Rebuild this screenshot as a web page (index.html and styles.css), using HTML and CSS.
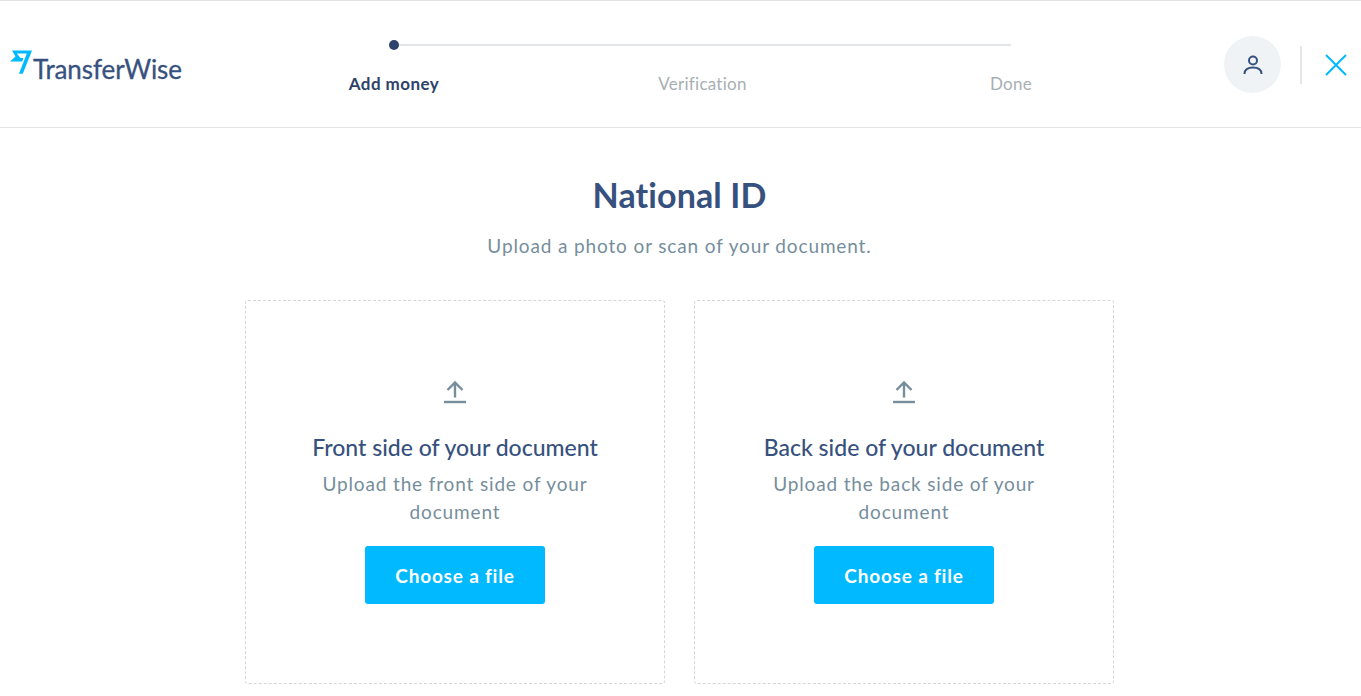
FILE: index.html
```html
<!DOCTYPE html>
<html lang="en">
<head>
<meta charset="utf-8">
<title>National ID</title>
<link rel="stylesheet" href="styles.css">
</head>
<body>
<header class="topbar">
  <div class="logo">
    <svg class="logo-flag" width="24" height="26" viewBox="0 0 24 26"><path d="M2 .5 H22 L12.8 23.8 H9 L16.8 3.5 H6.8 L10.5 8 H13.4 L12.2 11.5 H0 L5.5 6.5 Z" fill="#00b9ff"/></svg>
    <span class="logo-text">TransferWise</span>
  </div>
  <div class="stepper">
    <div class="track"><span class="dot"></span><span class="line"></span></div>
    <div class="labels">
      <span class="step active"><span>Add money</span></span>
      <span class="step"><span>Verification</span></span>
      <span class="step"><span>Done</span></span>
    </div>
  </div>
  <div class="actions">
    <div class="avatar">
      <svg width="24" height="24" viewBox="0 0 24 24" fill="none" stroke="#37517e" stroke-width="2"><circle cx="12" cy="7.5" r="4"/><path d="M3.5 21 C3.5 16.5 7 14.5 12 14.5 C17 14.5 20.5 16.5 20.5 21"/></svg>
    </div>
    <span class="divider"></span>
    <svg class="close" width="24" height="24" viewBox="0 0 24 24" fill="none" stroke="#00b9ff" stroke-width="2"><path d="M2 2 L22 22 M22 2 L2 22"/></svg>
  </div>
</header>
<main class="content">
  <h1 class="title">National ID</h1>
  <p class="subtitle">Upload a photo or scan of your document.</p>
  <div class="cards">
    <section class="card">
      <svg class="upload" width="24" height="24" viewBox="0 0 24 24" fill="none" stroke="#768e9c" stroke-width="2.4"><path d="M12 17.5 V3 M4.5 10 L12 2.5 L19.5 10"/><path d="M1 22 H23"/></svg>
      <h2 class="card-title">Front side of your document</h2>
      <p class="card-text">Upload the front side of your document</p>
      <button class="btn">Choose a file</button>
    </section>
    <section class="card">
      <svg class="upload" width="24" height="24" viewBox="0 0 24 24" fill="none" stroke="#768e9c" stroke-width="2.4"><path d="M12 17.5 V3 M4.5 10 L12 2.5 L19.5 10"/><path d="M1 22 H23"/></svg>
      <h2 class="card-title">Back side of your document</h2>
      <p class="card-text">Upload the back side of your document</p>
      <button class="btn">Choose a file</button>
    </section>
  </div>
</main>
</body>
</html>
```
FILE: styles.css
```css
* { box-sizing: border-box; }
html, body { margin: 0; height: 100%; overflow: hidden; }
body { background: #fff; font-family: "Lato", "Liberation Sans", sans-serif; color: #37517e; }

.topbar {
  height: 128px;
  border-top: 1px solid #dfe3e6;
  border-bottom: 1px solid #e2e6e8;
  display: flex;
  align-items: flex-start;
}
.logo { display: flex; align-items: flex-start; margin: 49px 0 0 10px; width: 379px; }
.logo-flag { flex: none; margin-right: -1px; }
.logo-text { font-size: 26px; line-height: 30px; margin-top: 4px; color: #37517e; letter-spacing: -0.1px; -webkit-text-stroke: 0.3px #37517e; }

.stepper { width: 622px; margin-top: 38px; }
.track { display: flex; align-items: center; height: 12px; }
.dot { width: 10px; height: 10px; border-radius: 50%; background: #2e4369; flex: none; }
.line { flex: 1; height: 2px; background: #e2e6e8; }
.labels { display: flex; justify-content: space-between; margin-top: 22px; padding-left: 5px; }
.step { width: 0; display: flex; justify-content: center; white-space: nowrap; font-size: 17px; line-height: 22px; letter-spacing: 0.25px; color: #a8afb3; }
.step.active { color: #2e4369; font-weight: 700; letter-spacing: 0.45px; }

.actions { margin-left: auto; display: flex; align-items: center; height: 57px; margin-top: 35px; }
.avatar { width: 57px; height: 57px; border-radius: 50%; background: #f0f3f6; display: flex; align-items: center; justify-content: center; }
.divider { width: 2px; height: 38px; background: #e2e6e8; margin-left: 19px; }
.close { margin: 0 13px 0 22px; }

.content { display: flex; flex-direction: column; align-items: center; padding-top: 47px; margin-left: -2px; }
.title { margin: 0; font-size: 34px; line-height: 40px; font-weight: 700; letter-spacing: 0.1px; color: #37517e; }
.subtitle { margin: 18px 0 0; font-size: 19px; line-height: 26px; letter-spacing: 0.87px; color: #768e9c; }
.cards { display: flex; gap: 29px; margin-top: 41px; }
.card {
  width: 420px; height: 384px;
  border: 1px dashed #d3d7da; border-radius: 3px;
  display: flex; flex-direction: column; align-items: center;
  padding: 79px 65px 0;
  text-align: center;
}
.upload { flex: none; }
.card-title { margin: 28px 0 0; font-size: 23px; line-height: 30px; font-weight: 500; color: #37517e; white-space: nowrap; }
.card-text { margin: 8px 0 0; font-size: 19px; line-height: 28px; letter-spacing: 0.85px; color: #768e9c; }
.btn {
  margin-top: 20px; width: 180px; height: 58px;
  background: #00b9ff; color: #fff; border: 0; border-radius: 3px;
  font: 700 19px "Lato", "Liberation Sans", sans-serif;
  letter-spacing: 0.8px;
}
```
